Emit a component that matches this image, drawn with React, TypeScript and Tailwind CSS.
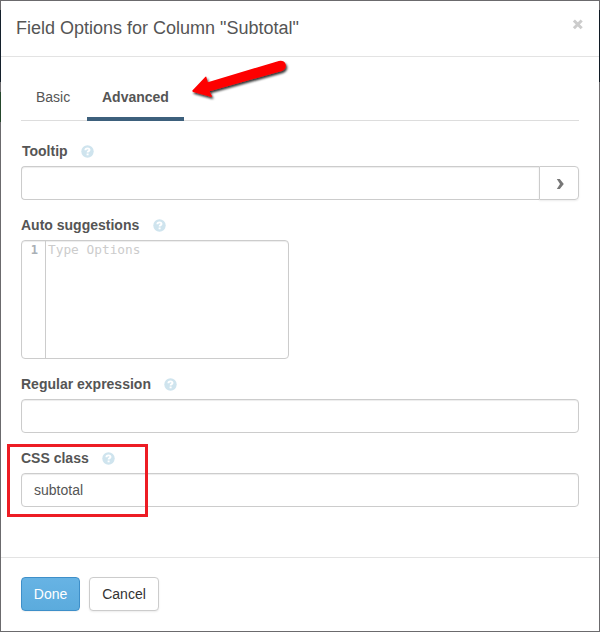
import type { ReactNode } from "react";

function HelpIcon() {
  return (
    <svg width="13" height="13" viewBox="0 0 13 13" className="shrink-0">
      <circle cx="6.5" cy="6.5" r="6.2" fill="#cfe4ee" />
      <path
        d="M4.4 5.3C4.4 3.9 5.3 3.4 6.5 3.4S8.5 4 8.5 5C8.5 6.2 6.6 6.1 6.6 7.6"
        fill="none"
        stroke="#fff"
        strokeWidth="1.9"
      />
      <rect x="5.6" y="8.5" width="2" height="1.8" fill="#fff" />
    </svg>
  );
}

function Label({ children, gap }: { children: ReactNode; gap: string }) {
  return (
    <div className={`flex h-5 items-center text-sm leading-5 font-bold text-[#555] ${gap}`}>
      <span className="whitespace-nowrap">{children}</span>
      <HelpIcon />
    </div>
  );
}

const inputClass =
  "block h-[34px] w-full rounded-[4px] border border-[#ccc] bg-white px-3 text-sm text-[#555] shadow-[inset_0_1px_1px_rgba(0,0,0,0.075)] outline-none";

export default function App() {
  return (
    <div className="relative flex h-[632px] w-[600px] bg-white font-['Liberation_Sans',Arial,sans-serif] text-[#555]">
      <div className="flex w-px shrink-0 flex-col bg-[#6b6a6d]">
        <div className="mt-[10px] h-[72px] bg-[#14202c]" />
        <div className="mt-[10px] h-[30px] bg-[#25472c]" />
      </div>
      <div className="flex min-w-0 grow flex-col border-y border-[#6b6a6d]">
        <header className="flex h-14 shrink-0 justify-between border-b border-[#e3e3e3] pr-[15px] pl-[15px]">
          <h1 className="pt-[14px] text-[18px] leading-[26px] whitespace-nowrap">
            Field Options for Column "Subtotal"
          </h1>
          <button aria-label="Close" className="mt-[18px] h-[12px]">
            <svg width="12" height="12" viewBox="0 0 12 12">
              <path d="M1.9 1.5L9.7 9.3M9.7 1.5L1.9 9.3" stroke="#ccc" strokeWidth="3" />
            </svg>
          </button>
        </header>
        <main className="h-[500px] shrink-0 px-5 pt-4">
          <nav className="flex h-12 border-b border-[#ddd] text-sm leading-5">
            <div className="w-[66px] pt-[14px] pl-[15px]">Basic</div>
            <div className="h-12 w-[97px] border-b-4 border-[#3d607c] pt-[14px] pl-[15px] font-bold">
              Advanced
            </div>
          </nav>
          <div className="pt-5">
            <Label gap="gap-[13.5px]">
              <span className="pl-px">Tooltip</span>
            </Label>
            <div className="mt-[5px] flex h-[34px]">
              <input
                aria-label="Tooltip"
                className="min-w-0 grow rounded-l-[4px] border border-r-0 border-[#ccc] bg-white px-3 text-sm shadow-[inset_0_1px_1px_rgba(0,0,0,0.075)] outline-none"
              />
              <button
                aria-label="Expand"
                className="flex w-10 items-center justify-center rounded-r-[4px] border border-[#ccc] pt-px pl-px shadow-[0_1px_2px_rgba(0,0,0,0.08)]"
              >
                <svg width="8" height="10" viewBox="0 0 8 10">
                  <path d="M0.8 0H3.8L7.8 5L3.8 10H0.8L4 5Z" fill="#777" />
                </svg>
              </button>
            </div>
          </div>
          <div className="pt-[15px]">
            <Label gap="gap-[13.5px]">Auto suggestions</Label>
            <div className="mt-[5px] flex h-[119px] w-[268px] overflow-hidden rounded-[4px] border border-[#ccc] font-['DejaVu_Sans_Mono',monospace] text-[12.8px] leading-[18px] shadow-[inset_0_1px_1px_rgba(0,0,0,0.075)]">
              <div className="w-6 border-r border-[#ccc] pr-[7px] text-right text-[12px] font-bold text-[#aab0b6]">
                1
              </div>
              <div className="pl-[2px] text-[#ccc]">Type Options</div>
            </div>
          </div>
          <div className="pt-[15px]">
            <Label gap="gap-[13.5px]">Regular expression</Label>
            <input aria-label="Regular expression" className={`mt-[5px] ${inputClass}`} />
          </div>
          <div className="pt-[15px]">
            <Label gap="gap-[13.5px]">CSS class</Label>
            <input aria-label="CSS class" defaultValue="subtotal" className={`mt-[5px] ${inputClass}`} />
          </div>
        </main>
        <footer className="flex grow gap-[9px] border-t border-[#e3e3e3] px-5 pt-[19px] text-sm">
          <button className="h-[34px] w-[59px] rounded-[4px] border border-[#3e8fc9] bg-linear-to-b from-[#67b3e4] to-[#5babdd] text-white shadow-[0_1px_1px_rgba(0,0,0,0.05)]">
            Done
          </button>
          <button className="h-[34px] w-[70px] rounded-[4px] border border-[#ccc] bg-white text-[#333] shadow-[0_1px_2px_rgba(0,0,0,0.08)]">
            Cancel
          </button>
        </footer>
      </div>
      <div className="flex w-px shrink-0 flex-col bg-[#6b6a6d]">
        <div className="mt-[10px] h-[72px] bg-[#101a24]" />
      </div>

      <div className="pointer-events-none absolute top-[444px] left-[7px] h-[73px] w-[141px] border-3 border-[#ed1c24]" />
      <svg
        className="pointer-events-none absolute top-[50px] left-[180px]"
        width="120"
        height="60"
        viewBox="0 0 120 60"
      >
        <defs>
          <filter id="shadow" x="-20%" y="-30%" width="140%" height="170%">
            <feDropShadow dx="1.3" dy="2" stdDeviation="1.2" floodColor="#000" floodOpacity="0.8" />
          </filter>
        </defs>
        <path
          d="M12.4 40.5L25.2 27Q26.4 26 26.5 27.6L27.8 32.2L98.8 11Q103.8 10 105.6 14Q106.8 19 101.8 20.9L29.5 41.2L31.9 46Q32 47.3 30.5 46.8L13.2 42Q12 41.5 12.4 40.5Z"
          fill="#fe0000"
          filter="url(#shadow)"
        />
      </svg>
    </div>
  );
}
